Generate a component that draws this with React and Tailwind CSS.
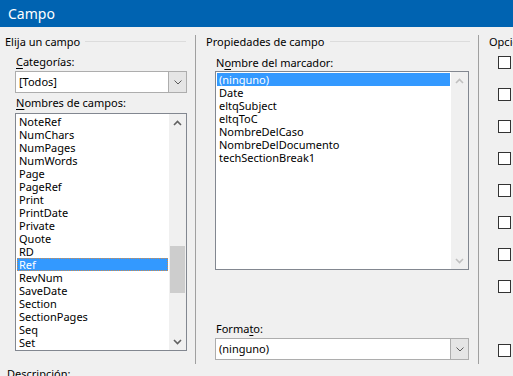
import React from 'react'

const leftItems = ['NoteRef', 'NumChars', 'NumPages', 'NumWords', 'Page', 'PageRef', 'Print', 'PrintDate', 'Private', 'Quote', 'RD', 'Ref', 'RevNum', 'SaveDate', 'Section', 'SectionPages', 'Seq', 'Set'];
const bookmarks = ['(ninguno)', 'Date', 'eltqSubject', 'eltqToC', 'NombreDelCaso', 'NombreDelDocumento', 'techSectionBreak1'];
const boxTops = ['mt-[7px]', 'mt-[19px]', 'mt-[19px]', 'mt-[19px]', 'mt-[19px]', 'mt-[19px]', 'mt-[19px]', 'mt-[19px]', 'mt-[51px]'];

const Chevron = ({ up, color = '#606060' }) => (
    <svg width="9" height="6" viewBox="0 0 9 6">
        <path d={up ? 'M1 5 L4.5 1.5 L8 5' : 'M1 1 L4.5 4.5 L8 1'} fill="none" stroke={color} strokeWidth="1.6" />
    </svg>
)

const Combo = ({ value, width }) => (
    <div className={`${width} h-[22px] flex border border-[#adadad] bg-white`}>
        <div className="flex-1 pl-[3px] leading-[20px]">{value}</div>
        <div className="w-[18px] bg-[#e5e5e5] border-l border-[#adadad] flex items-center justify-center">
            <svg width="8" height="5" viewBox="0 0 8 5">
                <path d="M0.5 0.5 L4 4 L7.5 0.5" fill="none" stroke="#5a5a5a" strokeWidth="1" />
            </svg>
        </div>
    </div>
)

const Label = ({ pre, u, post, className }) => (
    <div className={`h-[14px] leading-[14px] whitespace-nowrap ${className}`}>
        {pre}<span className="underline underline-offset-2">{u}</span>{post}
    </div>
)

const GroupHead = ({ title, className, lineClass }) => (
    <div className={`flex h-[14px] whitespace-nowrap ${className}`}>
        <div className="leading-[14px] shrink-0">{title}</div>
        <div className={`mt-[6px] h-px shrink-0 bg-[#dcdcdc] ${lineClass}`} />
    </div>
)

const App = () => {
    return (
        <div className="w-[513px] h-[376px] overflow-hidden bg-[#f0f0f0] text-[11px] text-black" style={{ fontFamily: '"Segoe UI", "Noto Sans", sans-serif' }}>
            <div className="h-[27px] bg-[#0063b1] text-white text-[14px] leading-[27px] pl-[8px]">Campo</div>
            <div className="flex">
                {/* left group */}
                <div className="w-[195px] shrink-0 pt-[8px] pl-[5px] flex flex-col">
                    <GroupHead title="Elija un campo" lineClass="ml-[5px] w-[101px]" />
                    <Label u="C" post="ategorías:" className="mt-[6px] ml-[11px]" />
                    <div className="mt-[2px] ml-[10px]"><Combo value="[Todos]" width="w-[172px]" /></div>
                    <Label u="N" post="ombres de campos:" className="mt-[3px] ml-[11px]" />
                    <div className="mt-[3px] ml-[10px] w-[172px] h-[238px] border border-[#828790] bg-white flex">
                        <div className="flex-1 p-px">
                            {leftItems.map((it) => (
                                <div key={it} className={`h-[13px] leading-[13px] pl-[2px] ${it === 'Ref' ? 'bg-[#3399ff] text-white outline outline-1 outline-dotted outline-[#d08b4a] -outline-offset-1' : ''}`}>{it}</div>
                            ))}
                        </div>
                        <div className="w-[17px] bg-[#f0f0f0] flex flex-col items-center">
                            <div className="h-[17px] flex items-center justify-center"><Chevron up /></div>
                            <div className="flex-1 w-full px-px">
                                <div className="mt-[115px] h-[47px] bg-[#cdcdcd]" />
                            </div>
                            <div className="h-[17px] flex items-center justify-center"><Chevron /></div>
                        </div>
                    </div>
                    <div className="mt-[16px] ml-[2px] h-[14px] leading-[14px]">Descripción:</div>
                </div>
                <div className="mt-[8px] shrink-0 w-px h-[329px] bg-[#a0a0a0]" />
                {/* middle group */}
                <div className="w-[282px] shrink-0 pt-[8px] flex flex-col">
                    <GroupHead title="Propiedades de campo" className="ml-[10px]" lineClass="ml-[6px] w-[140px]" />
                    <Label pre="N" u="o" post="mbre del marcador:" className="mt-[7px] ml-[20px]" />
                    <div className="mt-[1px] ml-[19px] w-[254px] h-[199px] border border-[#828790] bg-white flex">
                        <div className="flex-1 p-px">
                            {bookmarks.map((it) => (
                                <div key={it} className={`h-[13px] leading-[13px] pl-[2px] ${it === '(ninguno)' ? 'bg-[#3399ff] text-white' : ''}`}>{it}</div>
                            ))}
                        </div>
                        <div className="w-[17px] bg-[#f0f0f0] flex flex-col justify-between">
                            <div className="h-[17px] flex items-center justify-center"><Chevron up color="#c0c0c0" /></div>
                            <div className="h-[17px] flex items-center justify-center"><Chevron color="#c0c0c0" /></div>
                        </div>
                    </div>
                    <Label pre="Forma" u="t" post="o:" className="mt-[52px] ml-[20px]" />
                    <div className="mt-[2px] ml-[19px]"><Combo value="(ninguno)" width="w-[254px]" /></div>
                </div>
                <div className="mt-[8px] shrink-0 w-px h-[329px] bg-[#a0a0a0]" />
                {/* right group */}
                <div className="flex-1 min-w-0 overflow-hidden pt-[8px] pl-[10px] flex flex-col">
                    <div className="h-[14px] leading-[14px] whitespace-nowrap">Opciones</div>
                    {boxTops.map((m, i) => (
                        <div key={i} className={`${m} ml-[9px] shrink-0 w-[13px] h-[13px] border border-[#333333] bg-white`} />
                    ))}
                </div>
            </div>
        </div>
    )
}

export default App
